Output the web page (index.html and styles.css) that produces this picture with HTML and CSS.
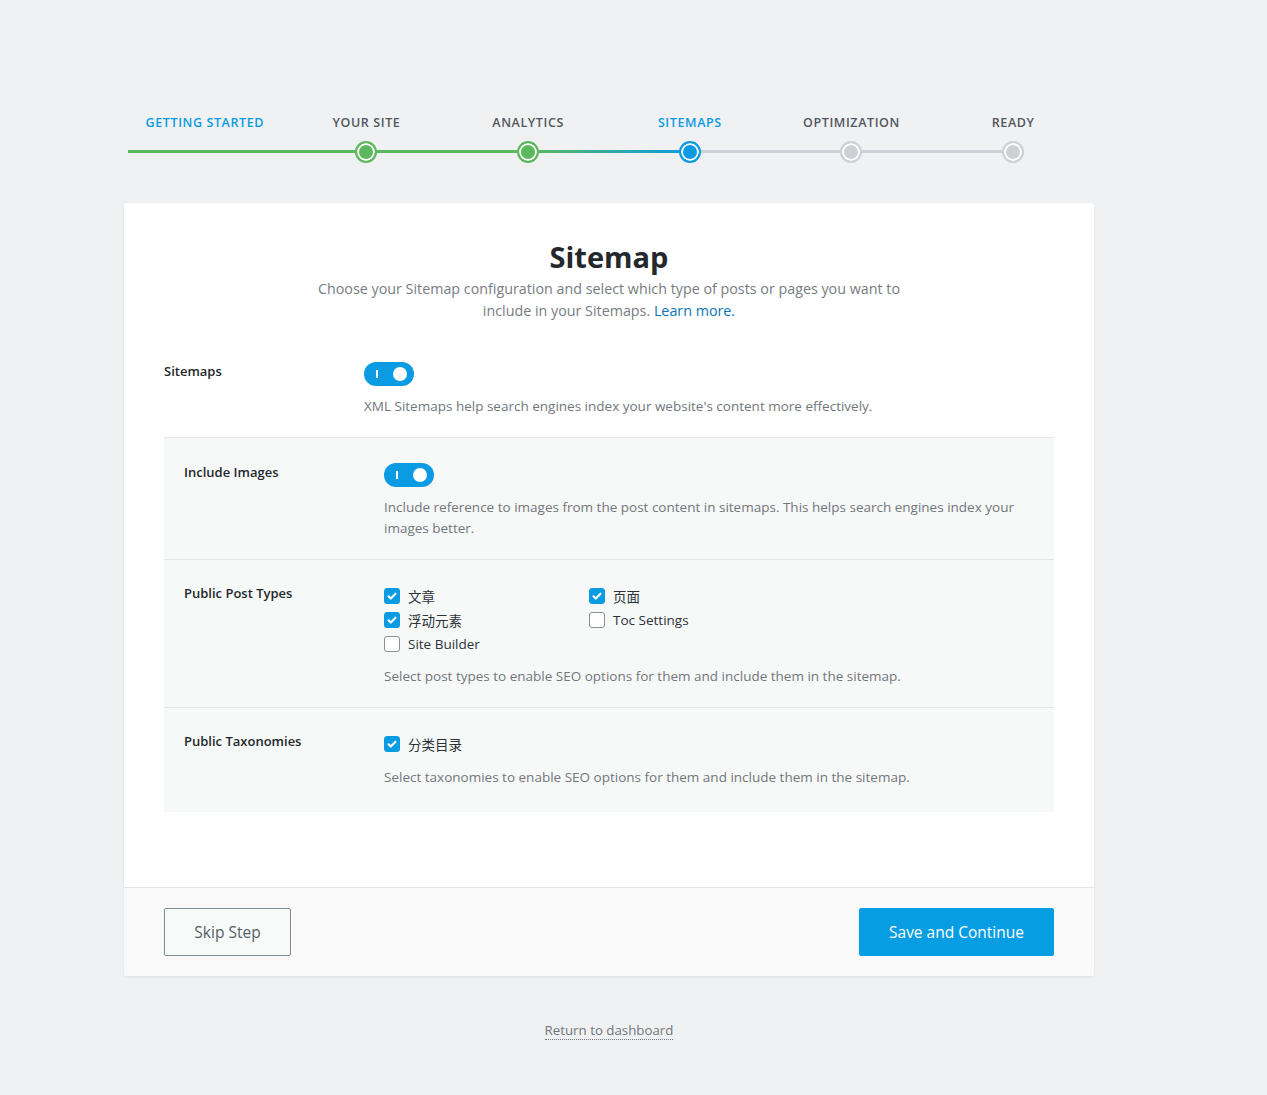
FILE: index.html
```html
<!DOCTYPE html>
<html>
<head>
<meta charset="utf-8">
<link rel="stylesheet" href="styles.css">
</head>
<body>
<div class="page">
  <div class="steps">
    <div class="steps-labels">
      <div class="step-label active">Getting Started</div>
      <div class="step-label">Your Site</div>
      <div class="step-label">Analytics</div>
      <div class="step-label active">Sitemaps</div>
      <div class="step-label">Optimization</div>
      <div class="step-label">Ready</div>
    </div>
    <div class="steps-track">
      <div class="track-line"></div>
      <div class="dot-cell"></div>
      <div class="dot-cell"><span class="dot done"></span></div>
      <div class="dot-cell"><span class="dot done"></span></div>
      <div class="dot-cell"><span class="dot current"></span></div>
      <div class="dot-cell"><span class="dot todo"></span></div>
      <div class="dot-cell"><span class="dot todo"></span></div>
    </div>
  </div>

  <div class="card">
    <div class="card-body">
      <h1 class="title">Sitemap</h1>
      <p class="intro">Choose your Sitemap configuration and select which type of posts or pages you want to<br>include in your Sitemaps. <a class="link" href="#">Learn more.</a></p>

      <div class="row row-main">
        <div class="row-label">Sitemaps</div>
        <div class="row-content">
          <span class="toggle"><span class="toggle-bar"></span><span class="toggle-knob"></span></span>
          <p class="desc">XML Sitemaps help search engines index your website's content more effectively.</p>
        </div>
      </div>

      <div class="subsection">
        <div class="row row-sub">
          <div class="row-label">Include Images</div>
          <div class="row-content">
            <span class="toggle"><span class="toggle-bar"></span><span class="toggle-knob"></span></span>
            <p class="desc">Include reference to images from the post content in sitemaps. This helps search engines index your images better.</p>
          </div>
        </div>
        <div class="row row-sub">
          <div class="row-label">Public Post Types</div>
          <div class="row-content">
            <div class="checks">
              <label class="check"><span class="box on"><svg viewBox="0 0 16 16"><path d="M4 8.3l2.6 2.6L12 5.4"/></svg></span>文章</label>
              <label class="check"><span class="box on"><svg viewBox="0 0 16 16"><path d="M4 8.3l2.6 2.6L12 5.4"/></svg></span>页面</label>
              <label class="check"><span class="box on"><svg viewBox="0 0 16 16"><path d="M4 8.3l2.6 2.6L12 5.4"/></svg></span>浮动元素</label>
              <label class="check"><span class="box"></span>Toc Settings</label>
              <label class="check"><span class="box"></span>Site Builder</label>
            </div>
            <p class="desc">Select post types to enable SEO options for them and include them in the sitemap.</p>
          </div>
        </div>
        <div class="row row-sub">
          <div class="row-label">Public Taxonomies</div>
          <div class="row-content">
            <div class="checks">
              <label class="check"><span class="box on"><svg viewBox="0 0 16 16"><path d="M4 8.3l2.6 2.6L12 5.4"/></svg></span>分类目录</label>
            </div>
            <p class="desc tax">Select taxonomies to enable SEO options for them and include them in the sitemap.</p>
          </div>
        </div>
      </div>
    </div>
    <div class="card-footer">
      <button class="btn btn-skip">Skip Step</button>
      <button class="btn btn-save">Save and Continue</button>
    </div>
  </div>

  <div class="return"><a class="return-link" href="#">Return to dashboard</a></div>
</div>
</body>
</html>
```

FILE: styles.css
```css
* { box-sizing: border-box; }
html, body { margin: 0; padding: 0; }
body {
  background: #f0f1f3;
  font-family: "Open Sans", "Noto Sans", "Noto Sans CJK SC", sans-serif;
  color: #23282d;
  min-height: 1095px;
}
.page {
  width: 970px;
  margin-left: 124px;
  padding-top: 114px;
}

/* steps */
.steps-labels {
  display: grid;
  grid-template-columns: repeat(6, 1fr);
}
.step-label {
  text-align: center;
  font-size: 12.5px;
  font-weight: 600;
  letter-spacing: 0.6px;
  text-transform: uppercase;
  color: #50575e;
  line-height: 18px;
}
.step-label.active { color: #0b9be3; }
.steps-track {
  position: relative;
  display: grid;
  grid-template-columns: repeat(6, 1fr);
  margin-top: 8px;
  height: 24px;
}
.track-line {
  position: absolute;
  left: 4px;
  top: 10px;
  width: 885px;
  height: 3px;
  background: linear-gradient(to right, #5cb85c 0, #5cb85c 400px, #0b9be3 561px, #cdd1d6 561px, #cdd1d6 100%);
}
.dot-cell {
  display: flex;
  justify-content: center;
  align-items: center;
  position: relative;
}
.dot {
  width: 22px;
  height: 22px;
  border-radius: 50%;
  border: 2px solid;
  box-shadow: inset 0 0 0 2px #fff;
}
.dot.done { border-color: #5cb85c; background: #5cb85c; }
.dot.current { border-color: #0b9be3; background: #0b9be3; }
.dot.todo { border-color: #cdd1d6; background: #cdd1d6; }

/* card */
.card {
  margin-top: 39px;
  background: #fff;
  border-radius: 3px;
  box-shadow: 0 1px 3px rgba(0,0,0,0.08);
  overflow: hidden;
}
.card-body {
  padding: 36px 40px 75px;
}
.title {
  margin: 0;
  text-align: center;
  font-size: 29px;
  line-height: 36px;
  font-weight: 700;
  color: #23282d;
}
.intro {
  margin: 3px 0 0;
  text-align: center;
  font-size: 14.3px;
  line-height: 22px;
  color: #777c82;
}
.link { color: #0a74b8; text-decoration: none; }

.row { display: flex; }
.row-label {
  width: 200px;
  flex: none;
  font-size: 13px;
  font-weight: 600;
  line-height: 18px;
  color: #23282d;
}
.row-content { flex: 1; }
.row-main {
  margin-top: 40px;
  padding-bottom: 20px;
  border-bottom: 1px solid #e2e4e7;
}

.subsection { background: #f7f8f8; }
.row-sub {
  padding: 25px 20px 20px;
  border-bottom: 1px solid #e2e4e7;
}
.row-sub:nth-child(2), .row-sub:nth-child(3) { padding-top: 24px; }
.row-sub:last-child { border-bottom: none; padding-bottom: 24px; }

.toggle {
  position: relative;
  display: block;
  width: 50px;
  height: 24px;
  border-radius: 12px;
  background: #0b9be3;
}
.toggle-bar {
  position: absolute;
  left: 12px;
  top: 8px;
  width: 2px;
  height: 8px;
  background: #fff;
}
.toggle-knob {
  position: absolute;
  right: 7px;
  top: 5px;
  width: 14px;
  height: 14px;
  border-radius: 50%;
  background: #fff;
}
.desc {
  margin: 10px 0 0;
  font-size: 13.5px;
  line-height: 21px;
  color: #72777c;
}
.desc.tax { margin-top: 11px; }

.checks {
  display: grid;
  grid-template-columns: 205px 205px;
  grid-auto-rows: 24px;
  width: 410px;
}
.check {
  display: flex;
  align-items: center;
  font-size: 13.5px;
  color: #2c3338;
}
.box {
  width: 16px;
  height: 16px;
  border-radius: 3px;
  border: 1px solid #8c8f94;
  background: #fff;
  margin-right: 8px;
  display: inline-flex;
}
.box.on { background: #0b9be3; border-color: #0b9be3; }
.box svg { width: 14px; height: 14px; }
.box svg path { fill: none; stroke: #fff; stroke-width: 2.4; stroke-linecap: round; stroke-linejoin: round; }

.card-footer {
  display: flex;
  justify-content: space-between;
  padding: 20px 40px 20px;
  background: #f9f9f9;
  border-top: 1px solid #e2e4e7;
}
.btn {
  height: 48px;
  font-family: inherit;
  font-size: 15.5px;
  border-radius: 2px;
  cursor: pointer;
}
.btn-skip {
  width: 127px;
  background: #f8f9f9;
  border: 1px solid #7e8993;
  color: #555d66;
}
.btn-save {
  width: 195px;
  background: #069de3;
  border: 1px solid #069de3;
  color: #fff;
}

.return {
  text-align: center;
  margin-top: 42px;
}
.return-link {
  font-size: 13.3px;
  color: #72777c;
  text-decoration: none;
  border-bottom: 1px dotted #72777c;
  line-height: 18px;
}
```
